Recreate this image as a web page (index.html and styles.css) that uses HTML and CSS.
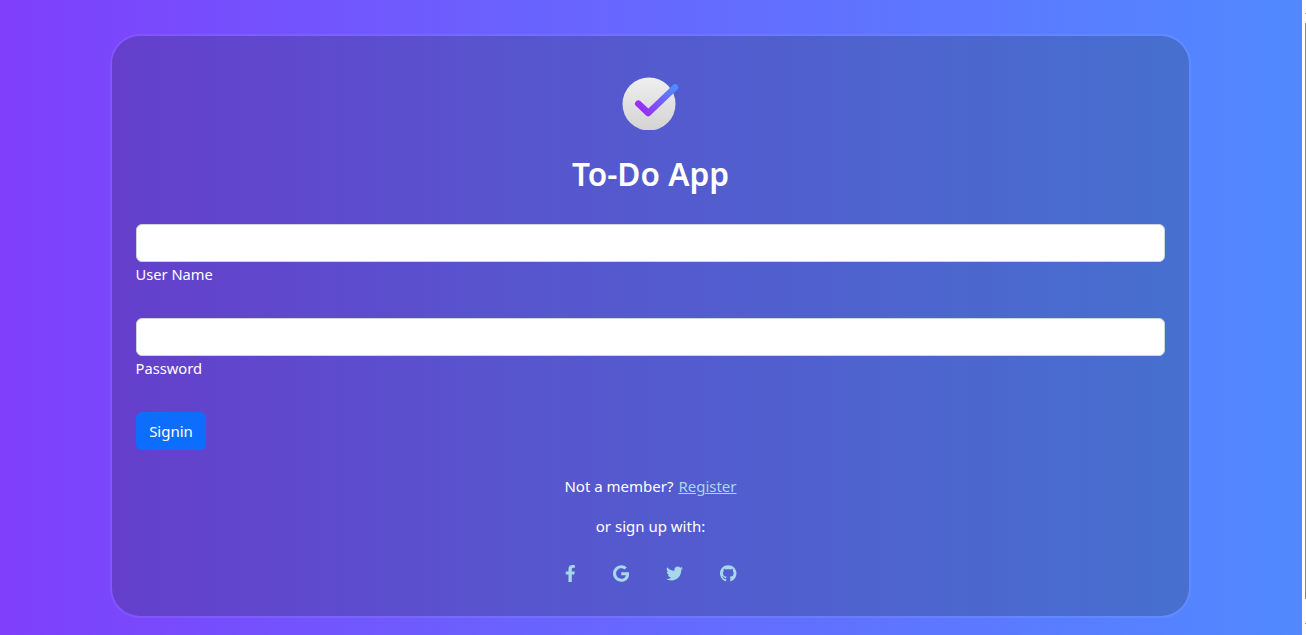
FILE: index.html
```html
<!DOCTYPE html>
<html lang="en">
<head>
<meta charset="utf-8">
<title>To-Do App</title>
<link rel="stylesheet" href="styles.css">
</head>
<body>
<div class="viewport">
  <main class="page">
    <form class="card">
      <div class="brand">
        <svg class="logo" viewBox="0 0 60 56" width="60" height="56" aria-hidden="true">
          <defs>
            <linearGradient id="disc" x1="0" y1="0" x2="0" y2="1">
              <stop offset="0" stop-color="#efefef"/>
              <stop offset="1" stop-color="#d3d3d3"/>
            </linearGradient>
            <linearGradient id="tick" gradientUnits="userSpaceOnUse" x1="22" y1="38" x2="54" y2="12">
              <stop offset="0" stop-color="#9a2cf5"/>
              <stop offset="1" stop-color="#4f8dff"/>
            </linearGradient>
          </defs>
          <circle cx="29" cy="30" r="26.5" fill="url(#disc)"/>
          <path d="M18.3 29.7 L28.3 39 L55 13.5" fill="none" stroke="url(#tick)" stroke-width="6.5" stroke-linecap="round" stroke-linejoin="round"/>
        </svg>
        <h1 class="title">To-Do App</h1>
      </div>
      <div class="field">
        <input class="input" type="text" id="user">
        <label class="label" for="user">User Name</label>
      </div>
      <div class="field">
        <input class="input" type="password" id="pass">
        <label class="label" for="pass">Password</label>
      </div>
      <button class="btn" type="button">Signin</button>
      <div class="foot">
        <p class="line line-first">Not a member? <a class="link" href="#">Register</a></p>
        <p class="line">or sign up with:</p>
        <div class="socials">
          <a class="social" href="#"><svg viewBox="0 0 320 512" class="ico"><path d="M279.14 288l14.22-92.66h-88.91v-60.13c0-25.35 12.42-50.06 52.24-50.06h40.42V6.26S260.43 0 225.36 0c-73.22 0-121.08 44.38-121.08 124.72v70.62H22.89V288h81.39v224h100.17V288z"/></svg></a>
          <a class="social" href="#"><svg viewBox="0 0 488 512" class="ico"><path d="M488 261.8C488 403.3 391.1 504 248 504 110.8 504 0 393.2 0 256S110.8 8 248 8c66.8 0 123 24.5 166.3 64.9l-67.5 64.9C258.5 52.6 94.3 116.6 94.3 256c0 86.5 69.1 156.6 153.7 156.6 98.2 0 135-70.4 140.8-106.9H248v-85.3h236.1c2.3 12.7 3.9 24.9 3.9 41.4z"/></svg></a>
          <a class="social" href="#"><svg viewBox="0 0 512 512" class="ico"><path d="M459.37 151.716c.325 4.548.325 9.097.325 13.645 0 138.72-105.583 298.558-298.558 298.558-59.452 0-114.68-17.219-161.137-47.106 8.447.974 16.568 1.299 25.34 1.299 49.055 0 94.213-16.568 130.274-44.832-46.132-.975-84.792-31.188-98.112-72.772 6.498.974 12.995 1.624 19.818 1.624 9.421 0 18.843-1.3 27.614-3.573-48.081-9.747-84.143-51.98-84.143-102.985v-1.299c13.969 7.797 30.214 12.67 47.431 13.319-28.264-18.843-46.781-51.005-46.781-87.391 0-19.492 5.197-37.36 14.294-52.954 51.655 63.675 129.3 105.258 216.365 109.807-1.624-7.797-2.599-15.918-2.599-24.04 0-57.828 46.782-104.934 104.934-104.934 30.213 0 57.502 12.67 76.67 33.137 23.715-4.548 46.456-13.32 66.599-25.34-7.798 24.366-24.366 44.833-46.132 57.827 21.117-2.273 41.584-8.122 60.426-16.243-14.292 20.791-32.161 39.308-52.628 54.253z"/></svg></a>
          <a class="social" href="#"><svg viewBox="0 0 496 512" class="ico"><path d="M165.9 397.4c0 2-2.3 3.6-5.2 3.6-3.3.3-5.6-1.3-5.6-3.6 0-2 2.3-3.6 5.2-3.6 3-.3 5.6 1.3 5.6 3.6zm-31.1-4.5c-.7 2 1.3 4.3 4.3 4.9 2.6 1 5.6 0 6.2-2s-1.3-4.3-4.3-5.2c-2.6-.7-5.5.3-6.2 2.3zm44.2-1.7c-2.9.7-4.9 2.6-4.6 4.9.3 2 2.9 3.3 5.9 2.6 2.9-.7 4.9-2.6 4.6-4.6-.3-1.9-3-3.2-5.9-2.9zM244.8 8C106.1 8 0 113.3 0 252c0 110.9 69.8 205.8 169.5 239.2 12.8 2.3 17.3-5.6 17.3-12.1 0-6.2-.3-40.4-.3-61.4 0 0-70 15-84.7-29.8 0 0-11.4-29.1-27.8-36.6 0 0-22.9-15.7 1.6-15.4 0 0 24.9 2 38.6 25.8 21.9 38.6 58.6 27.5 72.9 20.9 2.3-16 8.8-27.1 16-33.7-55.9-6.2-112.3-14.3-112.3-110.5 0-27.5 7.6-41.3 23.6-58.9-2.6-6.5-11.1-33.3 2.6-67.9 20.9-6.5 69 27 69 27 20-5.6 41.5-8.5 62.8-8.5s42.8 2.9 62.8 8.5c0 0 48.1-33.6 69-27 13.7 34.7 5.2 61.4 2.6 67.9 16 17.7 25.8 31.5 25.8 58.9 0 96.5-58.9 104.2-114.8 110.5 9.2 7.9 17 22.9 17 46.4 0 33.7-.3 75.4-.3 83.6 0 6.5 4.6 14.4 17.3 12.1C428.2 457.8 496 362.9 496 252 496 113.3 383.5 8 244.8 8z"/></svg></a>
        </div>
      </div>
    </form>
  </main>
  <div class="scrollbar">
    <span class="tick"></span>
    <span class="thumb"></span>
    <span class="tick tick-end"></span>
  </div>
</div>
</body>
</html>
```

FILE: styles.css
```css
* { box-sizing: border-box; }
html, body { margin: 0; height: 100%; overflow: hidden; }
body { font-family: "Noto Sans", "Open Sans", sans-serif; font-size: 15px; color: #fff; background: #fff; }

.viewport { display: flex; height: 635px; }

.page {
  flex: 0 0 1302px;
  height: 635px;
  padding: 34px 111px 0 110px;
  background: linear-gradient(to right, #7f3ffb, #6a62fe 40%, #5189ff);
}

.scrollbar { flex: 0 0 4px; display: flex; flex-direction: column; align-items: flex-end; padding-top: 13px; background: #fff; }
.thumb { width: 1px; height: 576px; background: #858585; }
.tick { width: 1px; height: 1px; margin-bottom: 9px; background: #858585; }
.tick-end { margin: 24px 0 0; }

.card {
  display: flex;
  flex-direction: column;
  align-items: stretch;
  height: 584px;
  padding: 0 24px;
  border: 2px solid rgba(255, 255, 255, .07);
  border-radius: 30px;
  background: rgba(15, 35, 15, .2);
  background-clip: padding-box;
}

.brand { display: flex; flex-direction: column; align-items: center; padding-top: 38px; }
.logo { display: block; margin-left: -1px; }
.title { margin: 23px 0 0; font-size: 31.6px; line-height: 42px; font-weight: 600; }

.field { display: flex; flex-direction: column; margin-top: 14px; height: 80px; }
.brand + .field { margin-top: 29px; }
.input { display: block; width: 100%; height: 38px; padding: 6px 12px; border: 1px solid #ced4da; border-radius: 6px; background: #fff; font: inherit; }
.label { margin: 1px 0 0 -.5px; line-height: 22px; font-size: 14.7px; }

.btn {
  align-self: flex-start;
  margin-top: 14px;
  width: 70px;
  height: 38px;
  border: 0;
  border-radius: 6px;
  background: #0d6efd;
  color: #fff;
  font: inherit;
}

.foot { display: flex; flex-direction: column; align-items: center; margin-top: 25px; }
.line { margin: 0 0 19px; line-height: 22px; }
.line-first { margin-bottom: 18px; }
.link { margin-left: 1px; color: #a6d8ea; }

.socials { display: flex; align-items: center; margin: 9px 0 0 1px; }
.social { display: flex; justify-content: center; padding: 0 18.5px; color: #a6d8ea; }
.ico { display: block; height: 17px; fill: currentColor; }
```
